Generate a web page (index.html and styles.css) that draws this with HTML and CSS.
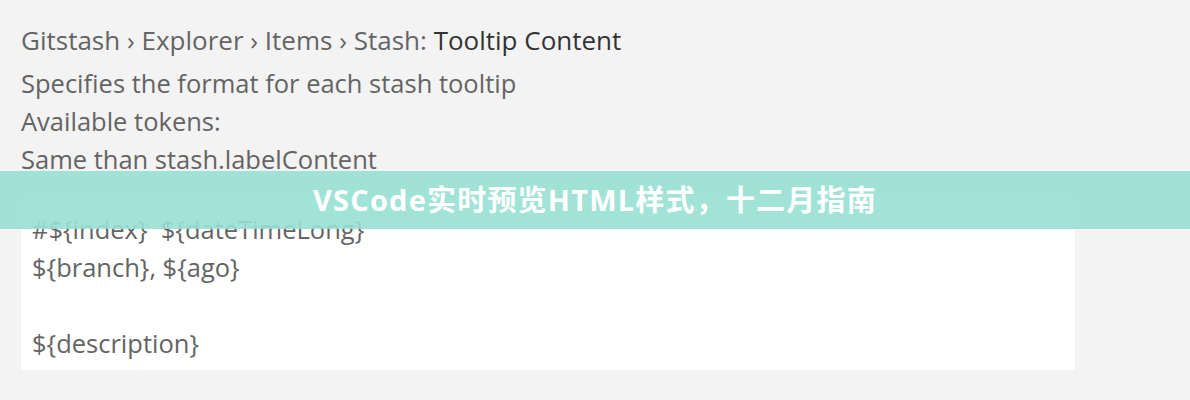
FILE: index.html
```html
<!DOCTYPE html>
<html lang="zh">
<head>
  <meta charset="UTF-8">
  <meta name="viewport" content="width=device-width, initial-scale=1.0">
  <title>VSCode实时预览HTML样式</title>
  <link rel="stylesheet" href="styles.css">
</head>
<body>
  <!-- Настройка -->
  <div class="setting">
    <div class="setting-title">Gitstash › Explorer › Items › Stash: <strong>Tooltip Content</strong></div>
    <div class="setting-desc">
      <div>Specifies the format for each stash tooltip</div>
      <div>Available tokens:</div>
      <div>Same than stash.labelContent</div>
    </div>
    <div class="setting-value">
      <div>#${index}&nbsp; ${dateTimeLong}</div>
      <div>${branch}, ${ago}</div>
      <div>&nbsp;</div>
      <div>${description}</div>
    </div>
  </div>

  <!-- Баннер -->
  <div class="banner">VSCode实时预览HTML样式，十二月指南</div>
</body>
</html>
```

FILE: styles.css
```css
/* Общие стили */
body {
  font-family: "Open Sans", "Noto Sans", sans-serif;
  background-color: #f3f3f3;
  color: #646464;
  margin: 0;
  padding: 0;
  height: 400px;
  overflow: hidden;
}

/* Настройка */
.setting {
  padding: 21px 0 0 21px;
  font-size: 25.5px;
  line-height: 38px;
}

.setting-title {
  font-size: 26px;
  margin-bottom: 5px;
}

.setting-title strong {
  color: #333;
  font-weight: 500;
}

.setting-value {
  width: 1032px;
  margin-top: 18px;
  padding: 14px 11px 8px;
  background: #fff;
}

/* Баннер */
.banner {
  position: absolute;
  top: 171px;
  left: 0;
  right: 0;
  height: 58px;
  line-height: 58px;
  background: rgba(152, 224, 212, 0.9);
  color: #fff;
  text-align: center;
  font-family: "Open Sans", "Noto Sans CJK SC", sans-serif;
  font-size: 29px;
  letter-spacing: 1.2px;
  font-weight: bold;
}
```
